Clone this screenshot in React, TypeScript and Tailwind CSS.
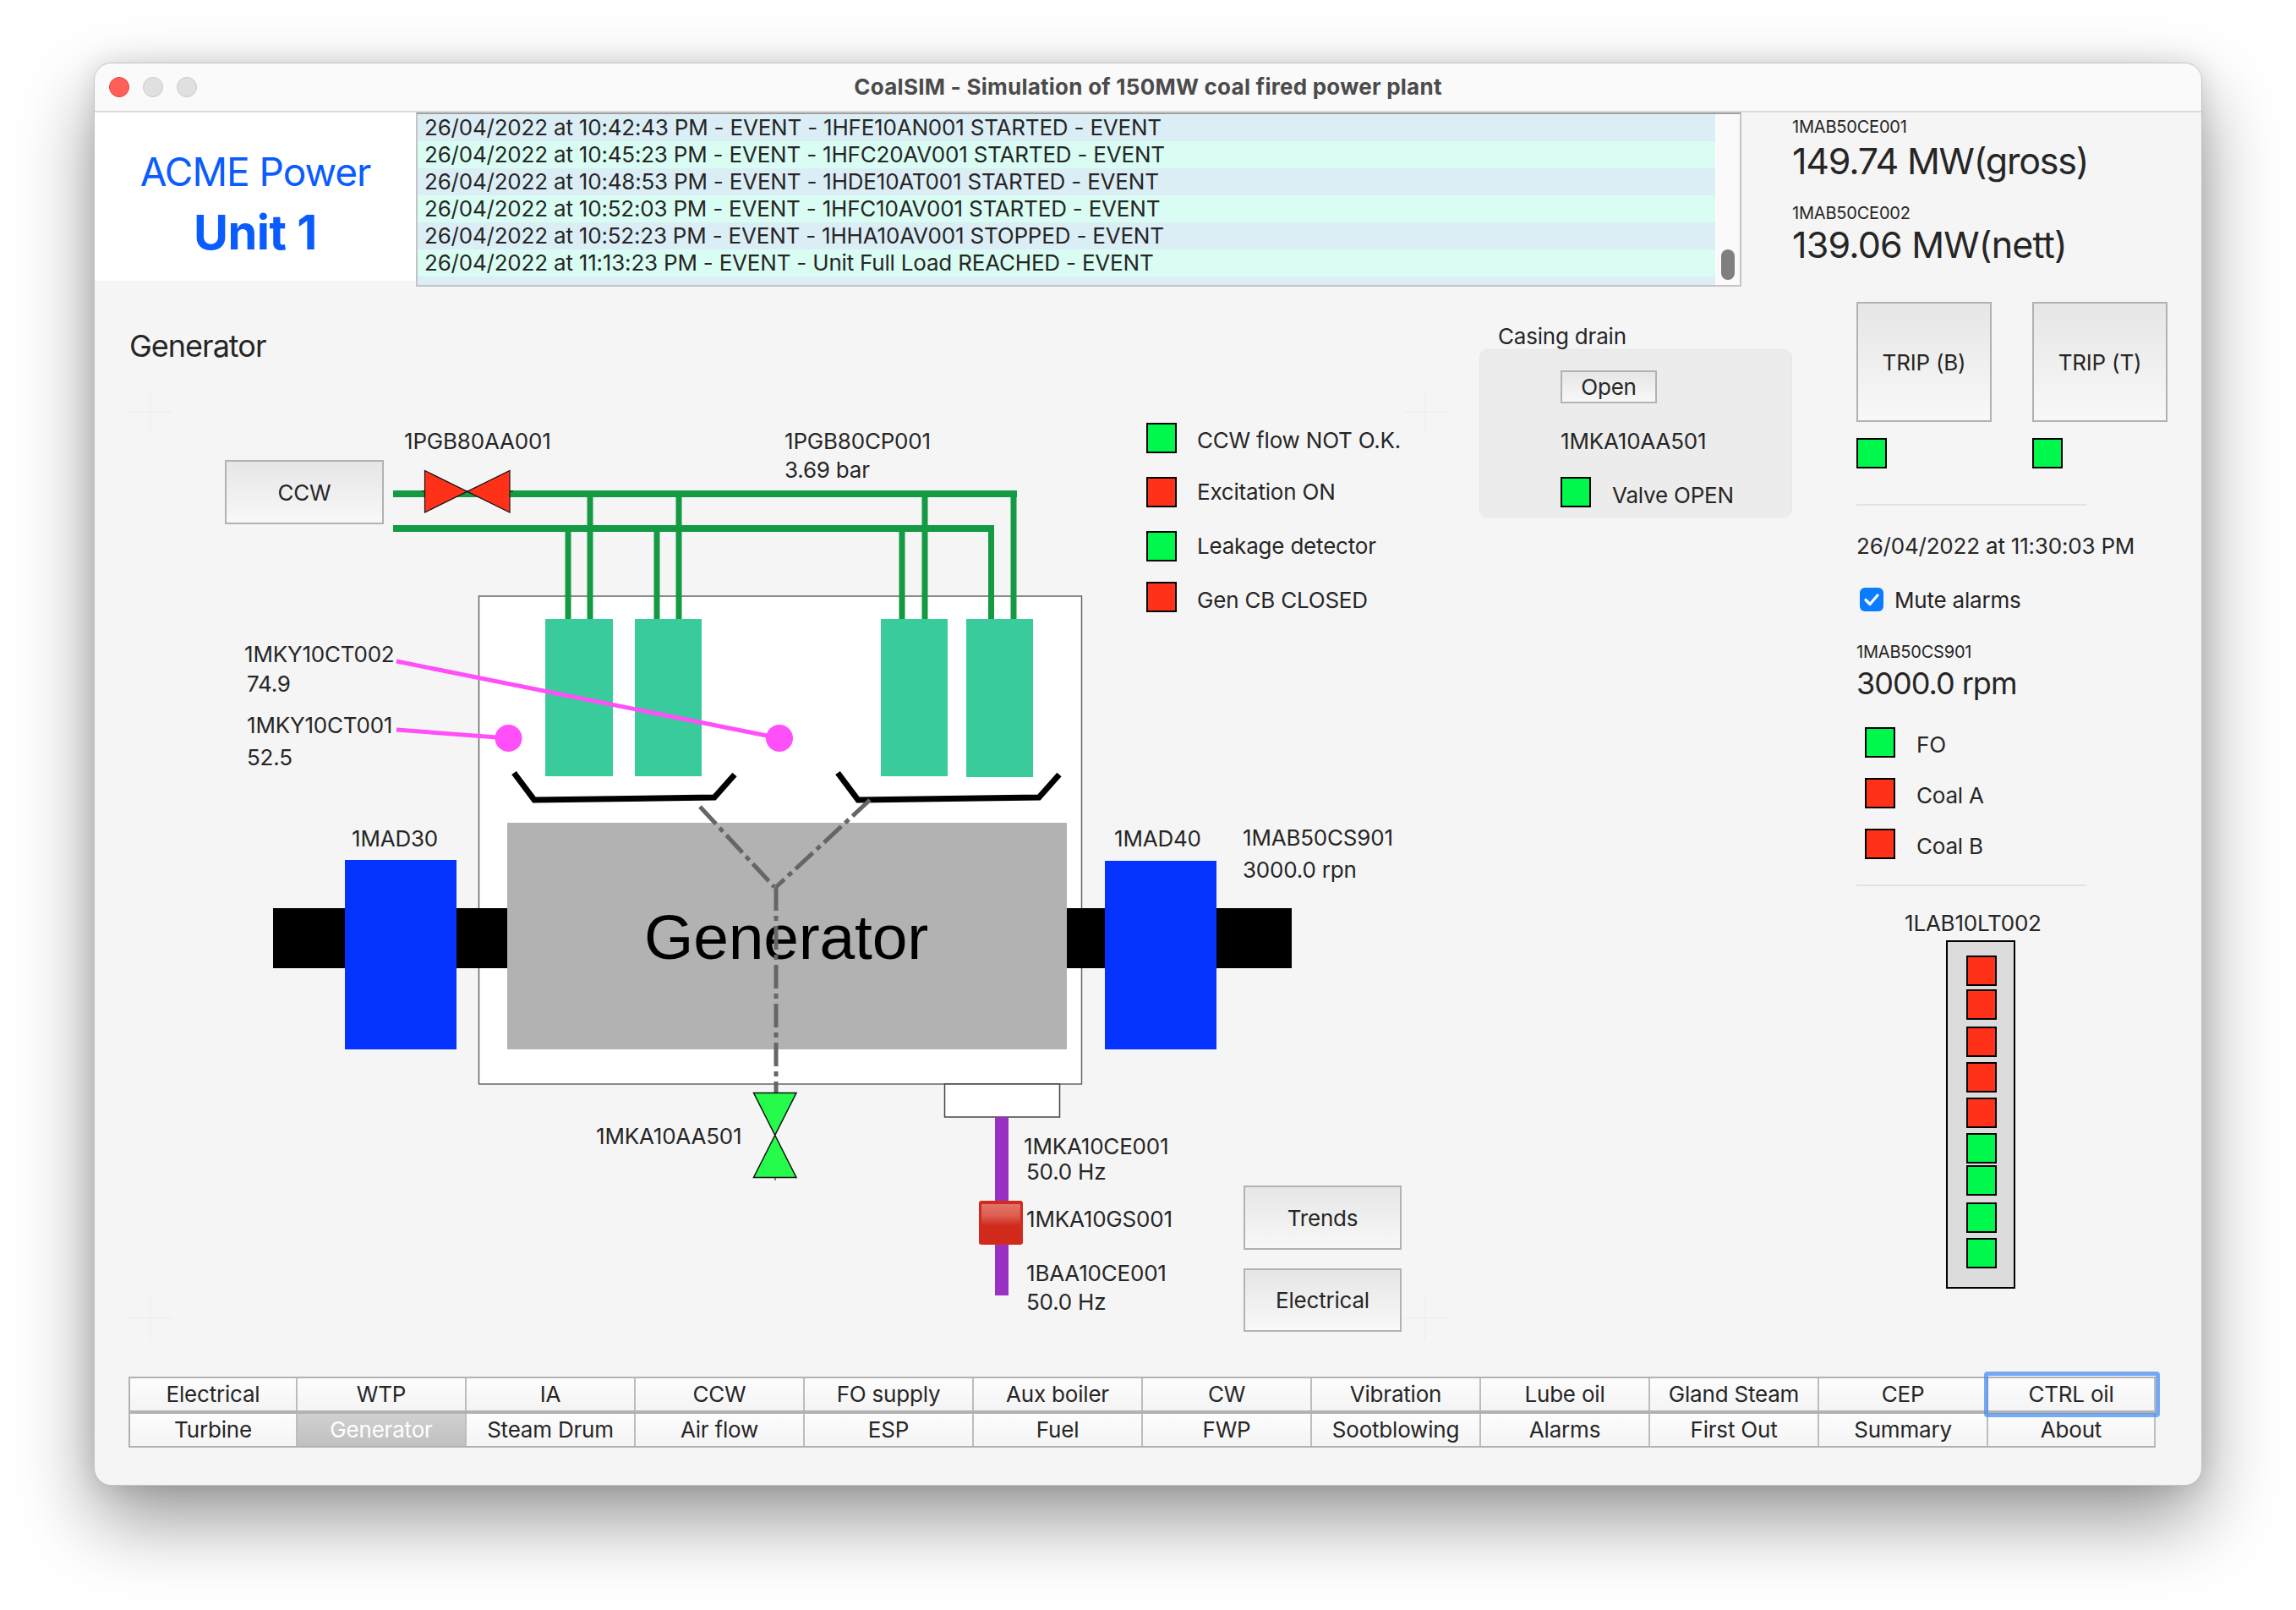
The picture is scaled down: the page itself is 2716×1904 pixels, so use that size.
import React from "react";

const font = "font-['Inter','Liberation_Sans',sans-serif]";

function Ind({ on, className = "" }: { on: boolean; className?: string }) {
  return (
    <div
      className={`h-[36px] w-[36px] shrink-0 border-2 border-black ${on ? "bg-[#00f84c]" : "bg-[#ff3219]"} ${className}`}
    />
  );
}

function Btn({ children, className = "" }: { children: React.ReactNode; className?: string }) {
  return (
    <button
      className={`flex items-center justify-center border-2 border-[#b2b2b2] bg-linear-to-b from-[#e6e6e6] to-[#f8f8f8] text-[#262626] ${className}`}
    >
      {children}
    </button>
  );
}

const log = [
  "26/04/2022 at 10:42:43 PM - EVENT - 1HFE10AN001 STARTED - EVENT",
  "26/04/2022 at 10:45:23 PM - EVENT - 1HFC20AV001 STARTED - EVENT",
  "26/04/2022 at 10:48:53 PM - EVENT - 1HDE10AT001 STARTED - EVENT",
  "26/04/2022 at 10:52:03 PM - EVENT - 1HFC10AV001 STARTED - EVENT",
  "26/04/2022 at 10:52:23 PM - EVENT - 1HHA10AV001 STOPPED - EVENT",
  "26/04/2022 at 11:13:23 PM - EVENT - Unit Full Load REACHED - EVENT",
];

const tabs1 = ["Electrical", "WTP", "IA", "CCW", "FO supply", "Aux boiler", "CW", "Vibration", "Lube oil", "Gland Steam", "CEP", "CTRL oil"];
const tabs2 = ["Turbine", "Generator", "Steam Drum", "Air flow", "ESP", "Fuel", "FWP", "Sootblowing", "Alarms", "First Out", "Summary", "About"];

function Diagram() {
  const cross = [
    [178, 487],
    [178, 1559],
    [1686, 487],
    [1686, 1559],
  ];
  return (
    <svg className="absolute left-0 top-0" width="1638" height="1284" viewBox="112 338 1638 1284">
      <defs>
        <linearGradient id="redbox" x1="0" y1="0" x2="0" y2="1">
          <stop offset="0" stopColor="#e2736a" />
          <stop offset="0.3" stopColor="#dc5e50" />
          <stop offset="0.55" stopColor="#d12a1b" />
          <stop offset="1" stopColor="#d02a1c" />
        </linearGradient>
      </defs>
      {cross.map(([x, y]) => (
        <g key={`${x}-${y}`} stroke="#ebebeb" strokeWidth="1">
          <line x1={x - 26} x2={x + 26} y1={y} y2={y} />
          <line x1={x} x2={x} y1={y - 26} y2={y + 26} />
        </g>
      ))}
      <rect x="566.5" y="705" width="713" height="577" fill="#fff" stroke="#666" strokeWidth="1.5" />
      <rect x="1117.5" y="1282" width="136" height="39" fill="#fff" stroke="#444" strokeWidth="1.5" />

      {/* pipes */}
      <g stroke="#149a42" fill="none">
        <line x1="465" x2="1203" y1="584" y2="584" strokeWidth="8" />
        <line x1="465" x2="1176" y1="625" y2="625" strokeWidth="8" />
        <g strokeWidth="7">
          <line x1="672" x2="672" y1="625" y2="732" />
          <line x1="777" x2="777" y1="625" y2="732" />
          <line x1="1067" x2="1067" y1="625" y2="732" />
          <line x1="1172.5" x2="1172.5" y1="625" y2="732" />
          <line x1="698" x2="698" y1="584" y2="736" />
          <line x1="803" x2="803" y1="584" y2="732" />
          <line x1="1094" x2="1094" y1="584" y2="732" />
          <line x1="1199" x2="1199" y1="584" y2="732" />
        </g>
      </g>
      {/* top valve */}
      <line x1="499" x2="607" y1="581" y2="581" stroke="#111" strokeWidth="1" />
      <polygon points="502.5,556.5 603,606 603,556.5 502.5,606" fill="#ff3219" stroke="#111" strokeWidth="1.2" />

      {/* coolers */}
      <rect x="645" y="732" width="80" height="186" fill="#3acb9d" />
      <rect x="751" y="732" width="79" height="186" fill="#3acb9d" />
      <rect x="1042" y="732" width="79" height="186" fill="#3acb9d" />
      <rect x="1143" y="732" width="79" height="187" fill="#3acb9d" />

      {/* thermocouple lines */}
      <line x1="469" y1="782" x2="922" y2="873" stroke="#ff4ff8" strokeWidth="5" />
      <line x1="469" y1="863" x2="601" y2="873" stroke="#ff4ff8" strokeWidth="5" />
      <circle cx="601.5" cy="873" r="16" fill="#ff4ff8" />
      <circle cx="922" cy="873" r="16" fill="#ff4ff8" />

      {/* drains */}
      <polyline points="608,914 632,946 845,943 869,916" fill="none" stroke="#000" strokeWidth="7" />
      <polyline points="991,914 1015,946 1229,943 1253,916" fill="none" stroke="#000" strokeWidth="7" />

      {/* shaft, generator */}
      <rect x="323" y="1074" width="1205" height="71" fill="#000" />
      <rect x="600" y="973" width="662" height="268" fill="#b2b2b2" />
      <rect x="408" y="1017" width="132" height="224" fill="#0433ff" />
      <rect x="1307" y="1018" width="132" height="223" fill="#0433ff" />
      <text
        x="930"
        y="1134"
        textAnchor="middle"
        fontSize="75"
        fontFamily="'Liberation Sans', Arial, sans-serif"
        fill="#000"
      >
        Generator
      </text>

      {/* drain lines */}
      <g stroke="#666" strokeWidth="5" fill="none" strokeDasharray="28 6 6 6">
        <line x1="828" y1="954" x2="916" y2="1049" />
        <line x1="1029" y1="946" x2="918" y2="1049" />
        <line x1="918" y1="1049" x2="918" y2="1292" />
      </g>

      {/* bottom valve */}
      <line x1="917" x2="917" y1="1388" y2="1396" stroke="#111" strokeWidth="1" />
      <polygon points="891.5,1292.5 942,1292.5 891.5,1392.5 942,1392.5" fill="#24fb4a" stroke="#111" strokeWidth="1.5" />

      {/* purple line, solenoid */}
      <rect x="1177" y="1321" width="16" height="211" fill="#9b30c4" />
      <rect x="1158" y="1420" width="52" height="52" rx="3" fill="#d22a1c" />
      <rect x="1161" y="1424" width="46" height="46" rx="1" fill="url(#redbox)" />
    </svg>
  );
}

function Label({ children, className }: { children: React.ReactNode; className: string }) {
  return <div className={`absolute whitespace-nowrap text-[26px] leading-[30px] text-[#262626] ${className}`}>{children}</div>;
}

export default function App() {
  return (
    <div className={`h-[1904px] w-[2716px] overflow-hidden bg-white pl-[112px] pt-[75px] tracking-[-0.2px] ${font}`}>
      <div className="flex h-[1681px] w-[2492px] flex-col overflow-hidden rounded-[20px] bg-[#f5f5f5] shadow-[0_0_0_1px_#c4c4c4,0_40px_90px_rgba(0,0,0,0.42),0_0_30px_rgba(0,0,0,0.12)]">
        {/* title bar */}
        <div className="relative flex h-[58px] shrink-0 items-center border-b-2 border-[#dcdcdc] bg-[#fafafa] pl-[17px]">
          <div className="flex gap-[16px]">
            <div className="h-[24px] w-[24px] rounded-full border border-[#e0443e] bg-[#ff5f57]" />
            <div className="h-[24px] w-[24px] rounded-full border border-[#c8c8c8] bg-[#e0e0e0]" />
            <div className="h-[24px] w-[24px] rounded-full border border-[#c8c8c8] bg-[#e0e0e0]" />
          </div>
          <div className="flex-1 pr-[121px] text-center text-[26px] font-bold leading-[30px] tracking-[0.25px] text-[#4b4b4b]">
            CoalSIM - Simulation of 150MW coal fired power plant
          </div>
        </div>

        {/* top row */}
        <div className="flex h-[205px] shrink-0 items-start">
          <div className="flex h-[199px] w-[380px] shrink-0 flex-col items-center bg-white pt-[40px] text-[#0a5cff]">
            <div className="text-[46px] leading-[60px] tracking-[-1px]">ACME Power</div>
            <div className="mt-[10px] text-[56px] font-bold leading-[64px] tracking-[-0.5px]">Unit 1</div>
          </div>
          <div className="flex h-[206px] w-[1568px] shrink-0 border-2 border-[#c4c4c4] border-t-[#9f9f9f] bg-[#dbeef6]">
            <div className="w-[1535px] shrink-0">
              {log.map((l, i) => (
                <div
                  key={l}
                  className={`h-[32px] whitespace-nowrap pl-[8px] text-[26px] leading-[32px] text-[#262626] ${i % 2 ? "bg-[#d9fdf3]" : "bg-[#dbeef6]"}`}
                >
                  {l}
                </div>
              ))}
            </div>
            <div className="flex flex-1 items-end justify-center bg-[#fafafa] pb-[6px] pl-[1px]">
              <div className="h-[36px] w-[16px] rounded-full bg-[#7f7f7f]" />
            </div>
          </div>
          <div className="ml-[60px] pt-[5px] text-[#262626]">
            <div className="text-[20px] leading-[24px]">1MAB50CE001</div>
            <div className="mt-[1px] whitespace-nowrap text-[43px] leading-[54px] tracking-[-1.2px]">149.74 MW(gross)</div>
            <div className="mt-[23px] text-[20px] leading-[24px]">1MAB50CE002</div>
            <div className="mt-[-2px] whitespace-nowrap text-[43px] leading-[54px] tracking-[-0.8px]">139.06 MW(nett)</div>
          </div>
        </div>

        {/* main */}
        <div className="flex h-[1284px] shrink-0">
          <div className="relative h-[1284px] w-[1638px] shrink-0">
            <Diagram />
            <Label className="left-[41px] top-[48px] text-[36px] leading-[46px] tracking-[-1px]">Generator</Label>
            <Label className="left-[366px] top-[169px]">1PGB80AA001</Label>
            <Label className="left-[816px] top-[169px]">1PGB80CP001</Label>
            <Label className="left-[816px] top-[203px]">3.69 bar</Label>
            <Label className="left-[177px] top-[421px]">1MKY10CT002</Label>
            <Label className="left-[180px] top-[456px]">74.9</Label>
            <Label className="left-[180px] top-[505px]">1MKY10CT001</Label>
            <Label className="left-[180px] top-[543px]">52.5</Label>
            <Label className="left-[304px] top-[639px]">1MAD30</Label>
            <Label className="left-[1206px] top-[639px]">1MAD40</Label>
            <Label className="left-[1358px] top-[638px]">1MAB50CS901</Label>
            <Label className="left-[1358px] top-[676px]">3000.0 rpn</Label>
            <Label className="left-[593px] top-[991px]">1MKA10AA501</Label>
            <Label className="left-[1099px] top-[1003px]">1MKA10CE001</Label>
            <Label className="left-[1102px] top-[1033px]">50.0 Hz</Label>
            <Label className="left-[1102px] top-[1089px]">1MKA10GS001</Label>
            <Label className="left-[1102px] top-[1153px]">1BAA10CE001</Label>
            <Label className="left-[1102px] top-[1187px]">50.0 Hz</Label>

            <Btn className="absolute left-[154px] top-[206px] h-[76px] w-[188px] text-[26px]">CCW</Btn>
            <Btn className="absolute left-[1359px] top-[1064px] h-[76px] w-[187px] text-[26px]">Trends</Btn>
            <Btn className="absolute left-[1359px] top-[1162px] h-[75px] w-[187px] text-[26px]">Electrical</Btn>

            <div className="absolute left-[1244px] top-[162px] flex flex-col text-[26px] leading-[36px] text-[#262626]">
              <div className="flex h-[36px]">
                <Ind on />
                <span className="ml-[24px] mt-[3px] whitespace-nowrap">CCW flow NOT O.K.</span>
              </div>
              <div className="mt-[28px] flex h-[36px]">
                <Ind on={false} />
                <span className="ml-[24px] whitespace-nowrap">Excitation ON</span>
              </div>
              <div className="mt-[28px] flex h-[36px]">
                <Ind on />
                <span className="ml-[24px] whitespace-nowrap">Leakage detector</span>
              </div>
              <div className="mt-[24px] flex h-[36px]">
                <Ind on={false} />
                <span className="ml-[24px] mt-[4px] whitespace-nowrap">Gen CB CLOSED</span>
              </div>
            </div>
          </div>

          {/* casing drain */}
          <div className="w-[370px] shrink-0 pt-[45px] text-[26px] text-[#262626]">
            <div className="pl-[22px] leading-[30px]">Casing drain</div>
            <div className="flex h-[199px] flex-col items-start rounded-[10px] border border-[#e6e6e6] bg-[#ececec] pl-[95px] pt-[24px]">
              <Btn className="h-[39px] w-[114px] text-[26px]">Open</Btn>
              <div className="mt-[30px] leading-[30px]">1MKA10AA501</div>
              <div className="mt-[27px] flex">
                <Ind on />
                <span className="ml-[25px] mt-[7px] leading-[30px]">Valve OPEN</span>
              </div>
            </div>
          </div>

          {/* right column */}
          <div className="ml-[76px] w-[370px] shrink-0 pt-[19px] text-[26px] text-[#262626]">
            <div className="flex gap-[48px]">
              <div className="w-[160px]">
                <Btn className="h-[142px] w-[160px] text-[26px]">TRIP (B)</Btn>
                <Ind on className="mt-[19px]" />
              </div>
              <div className="w-[160px]">
                <Btn className="h-[142px] w-[160px] text-[26px]">TRIP (T)</Btn>
                <Ind on className="mt-[19px]" />
              </div>
            </div>
            <div className="mt-[42px] h-[2px] w-[272px] bg-[#e2e2e2]" />
            <div className="mt-[33px] leading-[30px]">26/04/2022 at 11:30:03 PM</div>
            <div className="mt-[33px] flex h-[30px] items-center pl-[4px]">
              <div className="flex h-[28px] w-[28px] items-center justify-center rounded-[6px] bg-[#0a7cff]">
                <svg width="20" height="20" viewBox="0 0 20 20">
                  <path d="M3 10.5 L8 15.5 L17 5" fill="none" stroke="#fff" strokeWidth="3.2" strokeLinecap="round" strokeLinejoin="round" />
                </svg>
              </div>
              <span className="ml-[13px]">Mute alarms</span>
            </div>
            <div className="mt-[35px] text-[20px] leading-[24px]">1MAB50CS901</div>
            <div className="mt-[3px] text-[36px] leading-[44px] tracking-[-1px]">3000.0 rpm</div>
            <div className="mt-[30px] flex flex-col gap-[24px] pl-[10px]">
              {[
                ["FO", true],
                ["Coal A", false],
                ["Coal B", false],
              ].map(([t, on]) => (
                <div key={t as string} className="flex h-[36px]">
                  <Ind on={on as boolean} />
                  <span className="ml-[25px] mt-[3px] leading-[36px]">{t as string}</span>
                </div>
              ))}
            </div>
            <div className="mt-[30px] h-[2px] w-[272px] bg-[#e2e2e2]" />
            <div className="mt-[29px] pl-[57px] leading-[30px]">1LAB10LT002</div>
            <div className="ml-[106px] mt-[5px] flex h-[412px] w-[82px] flex-col border-2 border-black bg-[#dcdcdc] pl-[22px] pt-[16px]">
              <Ind on={false} />
              <Ind on={false} className="mt-[4px]" />
              <Ind on={false} className="mt-[8px]" />
              <Ind on={false} className="mt-[6px]" />
              <Ind on={false} className="mt-[6px]" />
              <Ind on className="mt-[6px]" />
              <Ind on className="mt-[2px]" />
              <Ind on className="mt-[8px]" />
              <Ind on className="mt-[6px]" />
            </div>
          </div>
        </div>

        {/* tabs */}
        <div className="px-[40px] pt-[6px]">
          <div className="relative w-[2398px] border-y-2 border-l-2 border-[#b2b2b2] text-[26px] text-[#262626]">
            {[tabs1, tabs2].map((row, ri) => (
              <div key={ri} className={`grid grid-cols-[198px_repeat(10,200px)_198px] ${ri === 1 ? "border-t-4 border-[#b2b2b2]" : ""}`}>
                {row.map((t) => (
                  <div
                    key={t}
                    className={`flex h-[38px] items-center justify-center border-r-2 border-[#bdbdbd] leading-[30px] ${
                      t === "Generator" && ri === 1
                        ? "bg-linear-to-b from-[#d0d0d0] to-[#c0c0c0] text-white"
                        : "bg-linear-to-b from-[#fdfdfd] to-[#f4f4f4]"
                    }`}
                  >
                    {t}
                  </div>
                ))}
              </div>
            ))}
            <div className="absolute left-[2193px] top-[-8px] h-[54px] w-[208px] rounded-[4px] border-[5px] border-[#4a90f0]/75" />
          </div>
        </div>
      </div>
    </div>
  );
}
